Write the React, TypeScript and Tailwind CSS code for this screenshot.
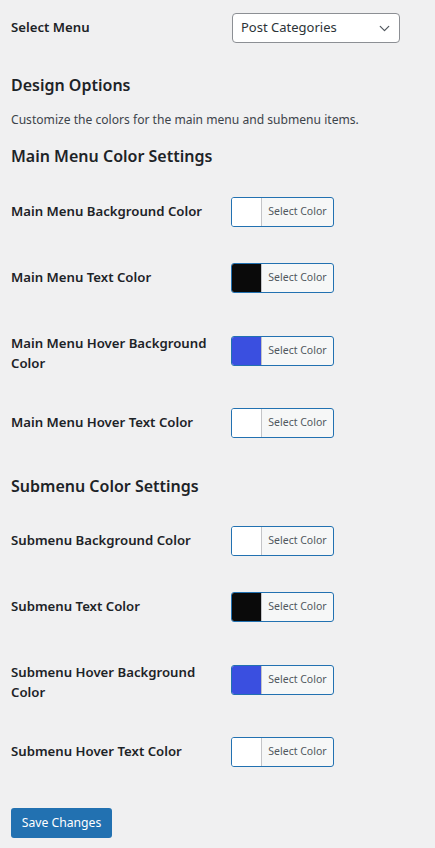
import { ChevronDown } from "lucide-react";

interface ColorRow {
  label: string;
  color: string;
}

const mainRows: ColorRow[] = [
  { label: "Main Menu Background Color", color: "#ffffff" },
  { label: "Main Menu Text Color", color: "#0a0a0a" },
  { label: "Main Menu Hover Background Color", color: "#3a4fe0" },
  { label: "Main Menu Hover Text Color", color: "#ffffff" },
];

const subRows: ColorRow[] = [
  { label: "Submenu Background Color", color: "#ffffff" },
  { label: "Submenu Text Color", color: "#0a0a0a" },
  { label: "Submenu Hover Background Color", color: "#3a4fe0" },
  { label: "Submenu Hover Text Color", color: "#ffffff" },
];

function ColorButton({ color }: { color: string }) {
  return (
    <button
      type="button"
      className="mb-[6px] flex h-[30px] w-[103px] overflow-hidden rounded-[3px] border border-[#2271b1] bg-[#f6f7f7] p-0"
    >
      <span className="h-full w-[30px] shrink-0 border-r border-[#c3c4c7]" style={{ backgroundColor: color }} />
      <span className="flex h-full flex-1 items-center justify-center text-[10.5px] text-[#50575e]">
        Select Color
      </span>
    </button>
  );
}

function Row({ label, color }: ColorRow) {
  return (
    <div className="flex">
      <div className="w-[220px] self-start py-[20px] pr-[10px] text-[13.2px] font-semibold leading-[19.5px] text-[#1d2327]">
        {label}
      </div>
      <div className="flex items-center py-[15px]">
        <ColorButton color={color} />
      </div>
    </div>
  );
}

export default function App() {
  return (
    <div className="min-h-[848px] w-[435px] bg-[#f0f0f1] px-[11px] pt-[13px] font-['Noto_Sans',sans-serif] text-[#3c434a]">
      <div className="flex items-center">
        <div className="w-[221px] text-[13.2px] font-semibold text-[#1d2327]">Select Menu</div>
        <div className="flex h-[30px] w-[168px] items-center justify-between rounded-[4px] border border-[#8c8f94] bg-white pl-[8px] pr-[6px] text-[13px] text-[#2c3338]">
          <span>Post Categories</span>
          <ChevronDown size={17} strokeWidth={1.75} className="text-[#50575e]" />
        </div>
      </div>

      <h2 className="mt-[30px] text-[16px] font-semibold leading-[24px] text-[#1d2327]">Design Options</h2>
      <p className="mt-[14px] text-[12.1px] leading-[18px]">
        Customize the colors for the main menu and submenu items.
      </p>

      <h3 className="mt-[15px] text-[16px] font-semibold leading-[24px] text-[#1d2327]">Main Menu Color Settings</h3>
      <div className="mt-[14px]">
        {mainRows.map((r) => (
          <Row key={r.label} {...r} />
        ))}
      </div>

      <h3 className="mt-[15px] text-[16px] font-semibold leading-[24px] text-[#1d2327]">Submenu Color Settings</h3>
      <div className="mt-[13px]">
        {subRows.map((r) => (
          <Row key={r.label} {...r} />
        ))}
      </div>

      <button
        type="button"
        className="mt-[20px] h-[30px] w-[101px] rounded-[3px] bg-[#2271b1] text-[12.2px] text-white"
      >
        Save Changes
      </button>
    </div>
  );
}
